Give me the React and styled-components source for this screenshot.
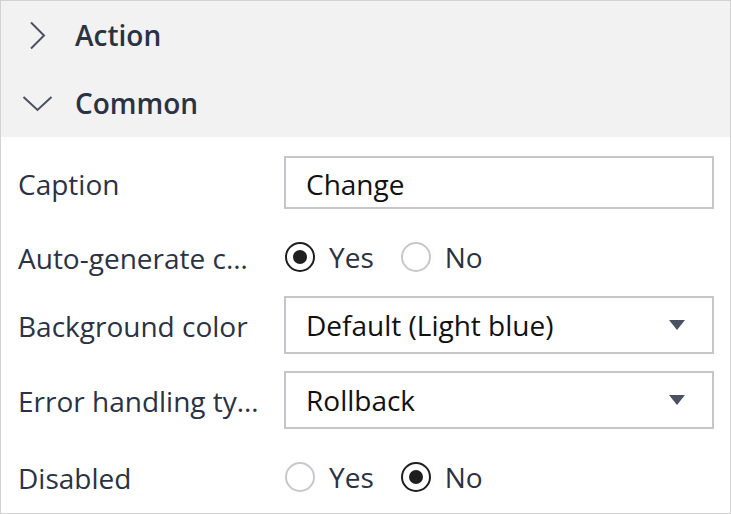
import React from "react";
import styled, { createGlobalStyle } from "styled-components";

const Global = createGlobalStyle`
  html, body { margin: 0; padding: 0; background: #ffffff; }
  body { font-family: "Open Sans", "Noto Sans", sans-serif; }
  * { box-sizing: border-box; }
`;

const Panel = styled.div`
  width: 731px;
  height: 514px;
  border: 1px solid #d2d2d2;
  background: #ffffff;
  display: flex;
  flex-direction: column;
  overflow: hidden;
`;

const Header = styled.div`
  background: #f2f2f2;
  display: flex;
  flex-direction: column;
`;

const SectionRow = styled.div`
  height: 68px;
  display: flex;
  align-items: center;
  padding-left: ${(p) => (p.$open ? "21px" : "28px")};
  color: #2b3243;
  font-size: 28px;
  font-weight: 650;
`;

const ChevronBox = styled.div`
  width: ${(p) => (p.$open ? "53px" : "46px")};
  display: flex;
  align-items: center;
`;

const Body = styled.div`
  display: flex;
  flex-direction: column;
  gap: 17px;
  padding: 19px 16px 0 17px;
`;

const Row = styled.div`
  display: grid;
  grid-template-columns: 266px 1fr;
  align-items: center;
  height: ${(p) => p.$h}px;
`;

const Label = styled.div`
  font-size: 28px;
  color: #2b3243;
  white-space: nowrap;
  overflow: hidden;
  text-overflow: ellipsis;
  max-width: 242px;
  padding-top: ${(p) => (p.$shift || 0) + 2}px;
`;

const TextBox = styled.div`
  height: 100%;
  border: 2px solid #c6c6ca;
  display: flex;
  align-items: center;
  padding: 2px 0 0 20px;
  font-size: 28px;
  color: #111111;
`;

const SelectBox = styled(TextBox)`
  justify-content: space-between;
  padding: 0 27px 0 20px;
`;

const Caret = styled.span`
  width: 0;
  height: 0;
  border-left: 8px solid transparent;
  border-right: 8px solid transparent;
  border-top: 10px solid #4b5160;
`;

const RadioGroup = styled.div`
  display: flex;
  align-items: center;
  padding-top: 8px;
  padding-left: 1px;
`;

const RadioItem = styled.label`
  display: flex;
  align-items: center;
  gap: 14px;
  margin-right: 27px;
  font-size: 28px;
  color: #2b3243;
`;

const Circle = styled.span`
  width: 30px;
  height: 30px;
  border-radius: 50%;
  border: ${(p) => (p.$on ? "2.5px solid #1e1e1e" : "2px solid #c8c8cc")};
  display: flex;
  align-items: center;
  justify-content: center;
  &::after {
    content: "";
    display: ${(p) => (p.$on ? "block" : "none")};
    width: 14px;
    height: 14px;
    border-radius: 50%;
    background: #1e1e1e;
  }
`;

const ChevronRight = () => (
  <svg width="17" height="29" viewBox="0 0 17 29">
    <polyline points="2,1.5 15,14.5 2,27.5" fill="none" stroke="#4b5160" strokeWidth="2" />
  </svg>
);

const ChevronDown = () => (
  <svg width="31" height="17" viewBox="0 0 31 17">
    <polyline points="1.5,2 15.5,15 29.5,2" fill="none" stroke="#4b5160" strokeWidth="2" />
  </svg>
);

const Radio = ({ on, children }) => (
  <RadioItem>
    <Circle $on={on} />
    {children}
  </RadioItem>
);

export default function App() {
  return (
    <>
      <Global />
      <Panel>
        <Header>
          <SectionRow>
            <ChevronBox>
              <ChevronRight />
            </ChevronBox>
            Action
          </SectionRow>
          <SectionRow $open>
            <ChevronBox $open>
              <ChevronDown />
            </ChevronBox>
            Common
          </SectionRow>
        </Header>
        <Body>
          <Row $h={53}>
            <Label>Caption</Label>
            <TextBox>Change</TextBox>
          </Row>
          <Row $h={53}>
            <Label $shift={8}>Auto-generate caption</Label>
            <RadioGroup>
              <Radio on>Yes</Radio>
              <Radio>No</Radio>
            </RadioGroup>
          </Row>
          <Row $h={58}>
            <Label>Background color</Label>
            <SelectBox>
              Default (Light blue)
              <Caret />
            </SelectBox>
          </Row>
          <Row $h={58}>
            <Label>Error handling type</Label>
            <SelectBox>
              Rollback
              <Caret />
            </SelectBox>
          </Row>
          <Row $h={53}>
            <Label $shift={8}>Disabled</Label>
            <RadioGroup>
              <Radio>Yes</Radio>
              <Radio on>No</Radio>
            </RadioGroup>
          </Row>
        </Body>
      </Panel>
    </>
  );
}
